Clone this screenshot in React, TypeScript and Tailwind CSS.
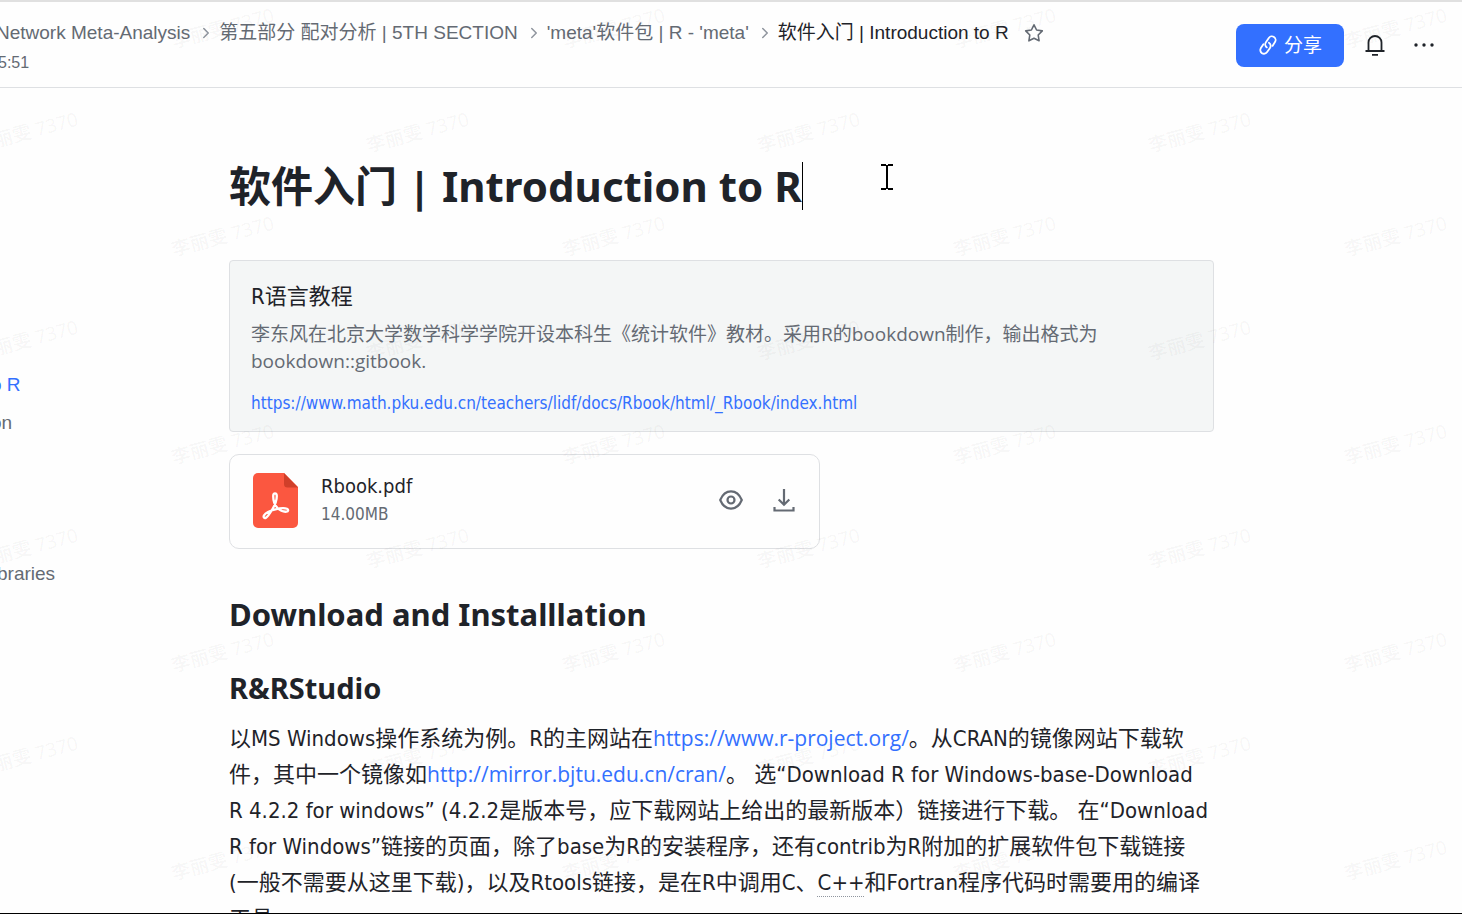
import { ChevronRight } from 'lucide-react'

const crumbs = ['Network Meta-Analysis', '第五部分 配对分析 | 5TH SECTION', "'meta'软件包 | R - 'meta'"]

function Watermark() {
  return (
    <div aria-hidden="true" className="pointer-events-none absolute inset-0 overflow-hidden select-none">
      <div className="-mt-6">
        {Array.from({ length: 9 }, (_, row) => (
          <div key={row} className={`flex h-26 w-[1955px] items-center ${row % 2 === 0 ? 'ml-[27px]' : '-ml-[169px]'}`}>
            {Array.from({ length: 5 }, (_, col) => (
              <span key={col} className="w-[391px] text-center">
                <span className="inline-block -rotate-15 font-['Open_Sans','Noto_Sans_CJK_SC',sans-serif] text-[19px] font-medium text-[#1f2329]/5">
                  李丽雯 7370
                </span>
              </span>
            ))}
          </div>
        ))}
      </div>
    </div>
  )
}

function StarIcon() {
  return (
    <svg viewBox="0 0 20 20" className="size-5" fill="none" stroke="#646a73" strokeWidth="1.6" strokeLinejoin="round">
      <path d="M10 1.8l2.6 5.2 5.7.9-4.1 4.1.9 5.8-5.1-2.6-5.1 2.6.9-5.8L1.7 7.9l5.7-.9z" />
    </svg>
  )
}

function LinkIcon() {
  return (
    <svg viewBox="0 0 20 22" className="h-[22px] w-5" fill="none" stroke="currentColor" strokeWidth="1.8" strokeLinecap="round">
      <path d="M8.8 13.4a3.7 3.7 0 0 1-.9-5.1l2.9-4.3a3.7 3.7 0 0 1 6.2 4.1l-2.5 3.8" />
      <path d="M10.9 8.7a3.7 3.7 0 0 1 1.1 5.2l-2.9 4.2a3.7 3.7 0 0 1-6.2-4.1l2.5-3.7" />
    </svg>
  )
}

function BellIcon() {
  return (
    <svg viewBox="0 0 20 22" className="h-[22px] w-5" fill="none" stroke="#1f2329" strokeWidth="1.8">
      <path d="M3.5 17V8.5a6.5 6.5 0 0 1 13 0V17M.5 17h19M7 20.8h6" />
    </svg>
  )
}

function MoreIcon() {
  return (
    <svg viewBox="0 0 20 4" className="h-1 w-5" fill="#1f2329">
      <circle cx="2" cy="2" r="1.7" />
      <circle cx="10" cy="2" r="1.7" />
      <circle cx="18" cy="2" r="1.7" />
    </svg>
  )
}

function PdfIcon() {
  return (
    <svg viewBox="0 0 45 55" className="h-[55px] w-[45px]" fill="none">
      <path d="M5 0h26l14 14v36a5 5 0 0 1-5 5H5a5 5 0 0 1-5-5V5a5 5 0 0 1 5-5z" fill="#fb5740" />
      <path d="M31 0l14 14.5H34.5A3.5 3.5 0 0 1 31 11z" fill="#d03f2a" />
      <path
        d="M20.2 23c0-3.6 3.6-3.6 3.6 0 0 4-1.5 8.5-4.3 13-2.3 4-4.5 7.5-6.5 8.7-1.7 1-3-.7-2-2.4 1.7-2.6 6.5-4.8 11.5-6 4-1 9-1.5 11.5-.5 1.7.8 1.4 2.7-.5 2.9-2.5.3-6.5-1.2-9-3.7-2.6-2.6-4.3-8-4.3-12z"
        stroke="#fff"
        strokeWidth="2.3"
        strokeLinejoin="round"
      />
    </svg>
  )
}

function EyeIcon() {
  return (
    <svg viewBox="0 0 24 20" className="h-5 w-6" fill="none" stroke="#646a73" strokeWidth="2.2">
      <path d="M1.2 10C3.5 4.5 7.3 1.4 12 1.4S20.5 4.5 22.8 10c-2.3 5.5-6.1 8.6-10.8 8.6S3.5 15.5 1.2 10z" strokeLinejoin="round" />
      <circle cx="12" cy="10" r="3.5" />
    </svg>
  )
}

function DownloadIcon() {
  return (
    <svg viewBox="0 0 22 24" className="h-6 w-[22px]" fill="none" stroke="#646a73" strokeWidth="2.2">
      <path d="M11 1v16M5.7 11.5L11 16.8l5.3-5.3M1.5 19v3.5h19V19" />
    </svg>
  )
}

function Header() {
  return (
    <header className="flex h-[88px] shrink-0 justify-between border-t-2 border-b border-t-[#e0e0e0] border-b-[#dee0e3]">
      <div className="pt-[19px] font-['Liberation_Sans','Noto_Sans_CJK_SC',sans-serif] text-[#646a73]">
        <nav aria-label="Breadcrumb" className="-ml-1 flex h-6 items-center text-[19px] leading-6 whitespace-nowrap">
          {crumbs.map((crumb) => (
            <span key={crumb} className="flex items-center">
              <a href="#">{crumb}</a>
              <ChevronRight className="mr-1 ml-[7px] size-[18px] text-[#8f959e]" strokeWidth={2} />
            </span>
          ))}
          <a href="#" aria-current="page" className="text-[#1f2329]">
            软件入门 | Introduction to R
          </a>
          <button aria-label="Favorite" className="ml-[15px]">
            <StarIcon />
          </button>
        </nav>
        <p className="mt-2 -ml-0.5 text-base leading-5">5:51</p>
      </div>
      <div className="mt-[22px] mr-7 flex h-[43px] items-center">
        <button className="flex h-[43px] w-[108px] items-center justify-center gap-1.5 rounded-lg bg-[#3370ff] pb-0.5 font-['Noto_Sans_CJK_SC',sans-serif] text-[19px] text-white">
          <LinkIcon />
          分享
        </button>
        <button aria-label="Notifications" className="ml-[21px] pb-0.5">
          <BellIcon />
        </button>
        <button aria-label="More" className="ml-[29px] pb-0.5">
          <MoreIcon />
        </button>
      </div>
    </header>
  )
}

function Outline() {
  return (
    <aside className="w-[229px] shrink-0 overflow-hidden pt-[285px] font-['Liberation_Sans',sans-serif] text-[19px] leading-6 text-[#646a73]">
      <a href="#" className="-ml-[9px] block text-[#3370ff]">
        o R
      </a>
      <a href="#" className="mt-[14px] -ml-[9px] block">
        on
      </a>
      <a href="#" className="mt-[127px] -ml-[3px] block">
        braries
      </a>
    </aside>
  )
}

export default function App() {
  return (
    <div
      lang="zh-CN"
      className="relative flex h-screen flex-col overflow-hidden border-b border-black bg-[#fefefe] font-['DejaVu_Sans_Condensed','Noto_Sans_CJK_SC',sans-serif] text-[#1f2329]"
    >
      <Header />
      <div className="flex min-h-0 flex-1">
        <Outline />
        <main className="mr-[248px] min-w-0 flex-1 pt-[74px]">
          <h1 className="flex items-center font-['Noto_Sans','Noto_Sans_CJK_SC',sans-serif] text-[42px] leading-12 font-bold">
            软件入门 | Introduction to R
            <span className="h-12 w-px bg-black" />
          </h1>

          {/* Bookmark card */}
          <section className="mt-[50px] rounded-sm border border-[#dee0e3] bg-[#f4f6f6] px-[21px] pt-[22px] pb-[14px]">
            <h2 className="text-[22px] leading-7">R语言教程</h2>
            <p className="mt-2.5 font-['Open_Sans','Noto_Sans_CJK_SC',sans-serif] text-[19px] leading-[27px] text-[#646a73]">
              李东风在北京大学数学科学学院开设本科生《统计软件》教材。采用R的bookdown制作，输出格式为bookdown::gitbook.
            </p>
            <a href="#" className="mt-[14px] block text-[17px] leading-7 text-[#3370ff]">
              https://www.math.pku.edu.cn/teachers/lidf/docs/Rbook/html/_Rbook/index.html
            </a>
          </section>

          {/* Attachment */}
          <section className="mt-[22px] flex h-[95px] w-[591px] items-center rounded-[10px] border border-[#dee0e3] pr-6 pb-[3px] pl-[23px]">
            <PdfIcon />
            <div className="ml-[23px] flex-1">
              <p className="text-[20px] leading-7">Rbook.pdf</p>
              <p className="text-[17px] leading-7 text-[#646a73]">14.00MB</p>
            </div>
            <button aria-label="Preview">
              <EyeIcon />
            </button>
            <button aria-label="Download" className="ml-[30px]">
              <DownloadIcon />
            </button>
          </section>

          <h2 className="mt-[43px] font-['Noto_Sans',sans-serif] text-[31px] leading-11 font-bold">Download and Installlation</h2>
          <h3 className="mt-8 font-['Noto_Sans',sans-serif] text-[29px] leading-10 font-bold">R&amp;RStudio</h3>
          <p className="mt-[13px] text-[22px] leading-9 whitespace-nowrap">
            以MS Windows操作系统为例。R的主网站在
            <a href="#" className="font-['Open_Sans',sans-serif] text-[21px] leading-none text-[#3370ff]">https://www.r-project.org/</a>
            。从CRAN的镜像网站下载软
            <br />
            件，其中一个镜像如
            <a href="#" className="font-['Open_Sans',sans-serif] text-[21px] leading-none text-[#3370ff]">http://mirror.bjtu.edu.cn/cran/</a>
            。 选“Download R for Windows-base-Download
            <br />
            R 4.2.2 for windows” (4.2.2是版本号，应下载网站上给出的最新版本）链接进行下载。 在“Download
            <br />
            R for Windows”链接的页面，除了base为R的安装程序，还有contrib为R附加的扩展软件包下载链接
            <br />
            (一般不需要从这里下载)，以及Rtools链接，是在R中调用C、
            <span className="underline decoration-[#8f959e] decoration-dotted decoration-1 underline-offset-[6px]">C++</span>
            和Fortran程序代码时需要用的编译
            <br />
            工具
          </p>
        </main>
      </div>

      <Watermark />

      {/* Text pointer */}
      <svg viewBox="0 0 14 26" className="absolute top-[164px] left-[880px] h-[26px] w-3.5" fill="none" stroke="#000" strokeWidth="2">
        <path d="M1 1h5M8 1h5M7 1v24M1 25h5M8 25h5" />
      </svg>
    </div>
  )
}
